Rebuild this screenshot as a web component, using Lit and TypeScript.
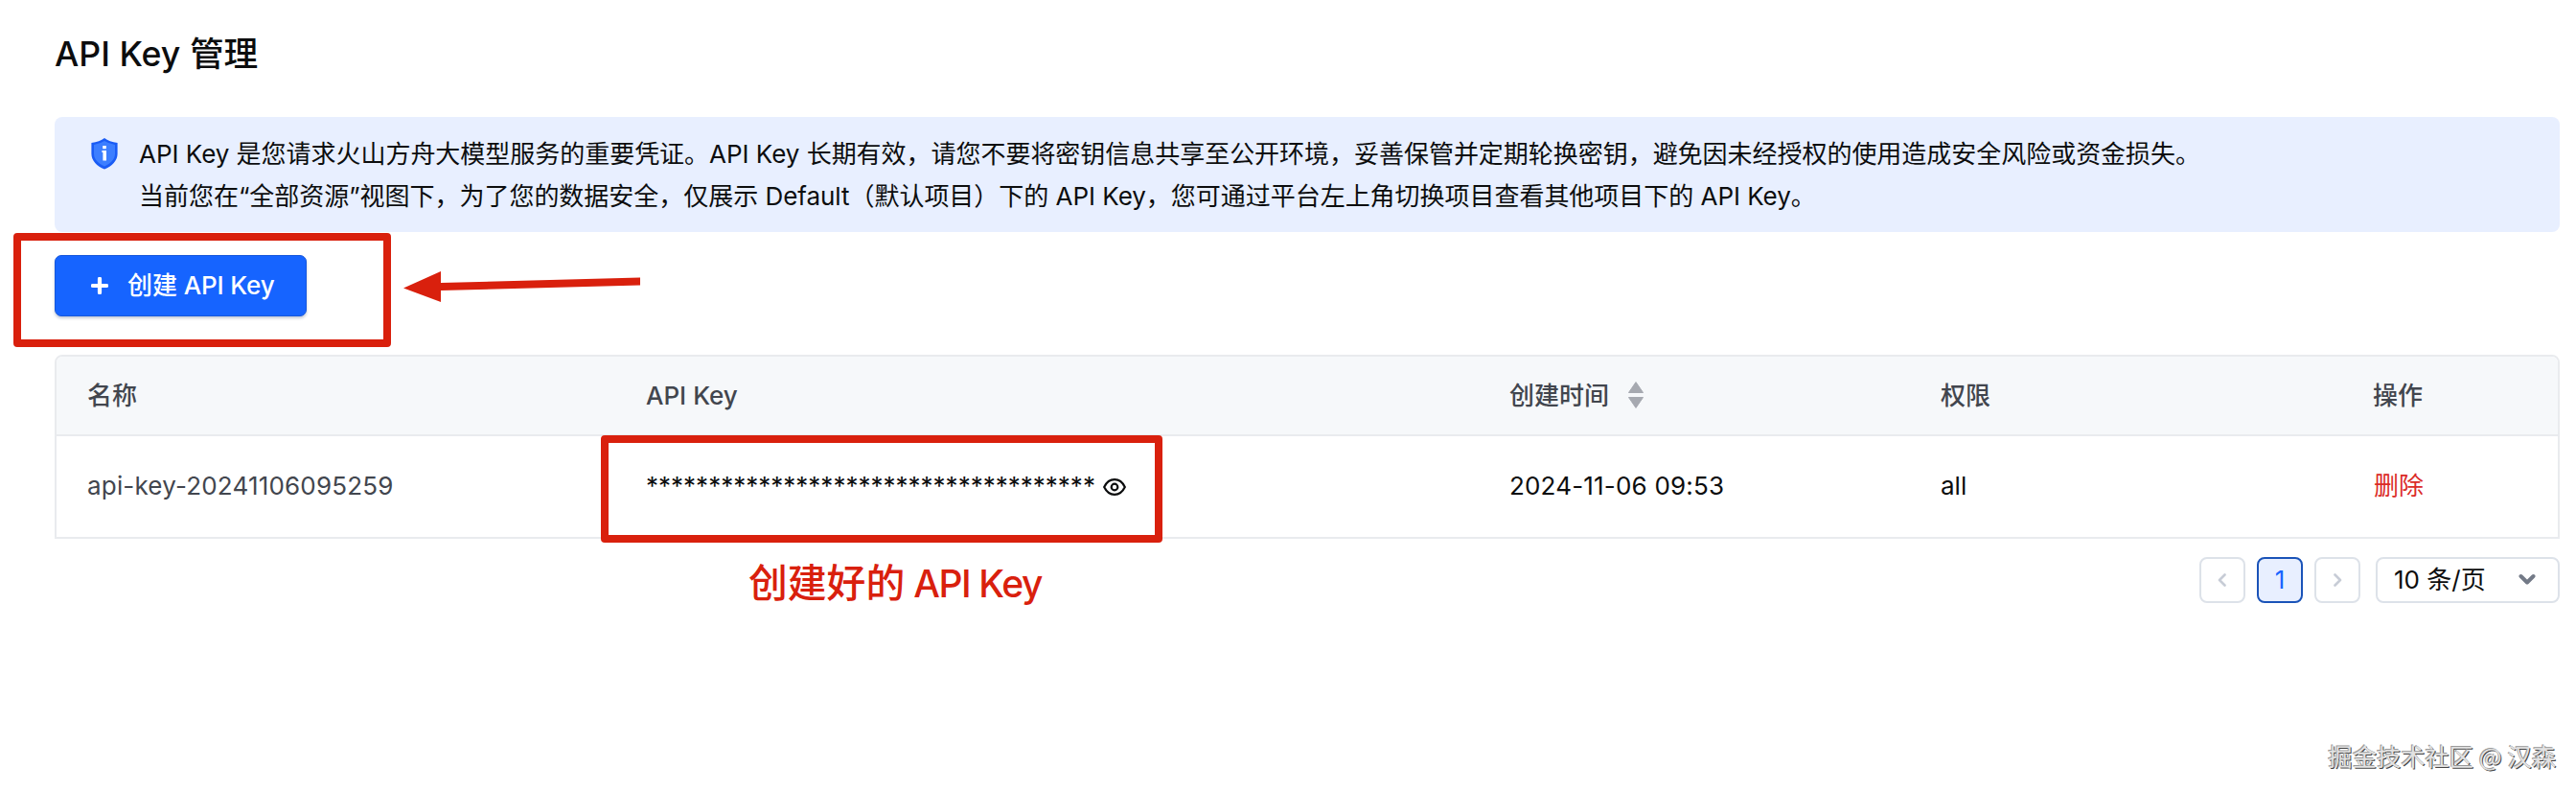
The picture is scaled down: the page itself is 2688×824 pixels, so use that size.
import { LitElement, css, html, svg } from 'lit'

const ROWS = [
  {
    name: 'api-key-20241106095259',
    secret: '*'.repeat(36),
    created: '2024-11-06 09:53',
    scope: 'all',
  },
]

const shieldIcon = svg`
  <svg class="shield" viewBox="0 0 28 32" width="28" height="32">
    <path d="M14 0Q19 4 27.600 5V16.500C27.600 23.500 21.800 29.500 14 32.500 6.200 29.500 .4 23.500 .4 16.500V5Q9 4 14 0Z" fill="#1a5cf5" />
    <path d="M14 3Q18.500 6 25 6.900V16.500C25 22 20.500 26.700 14 29.400 7.500 26.700 3 22 3 16.500V6.900Q9.500 6 14 3Z" fill="#3c7eff" />
    <path d="M12.200 8h3.600v3.200h-3.600zM11.400 13h4.600V23.600h-3.600V15h-1z" fill="#fff" />
  </svg>
`

const plusIcon = svg`
  <svg class="plus" viewBox="0 0 18 18" width="18" height="18">
    <path d="M9 1.800v14.400M1.800 9h14.400" stroke="#fff" stroke-width="4.200" stroke-linecap="round" />
  </svg>
`

const eyeIcon = svg`
  <svg class="eye" viewBox="0 0 24 18" width="24" height="18">
    <path d="M1.200 9C3.600 4 7.400 1.200 12 1.200S20.400 4 22.800 9C20.400 14 16.600 16.800 12 16.800S3.600 14 1.200 9Z" fill="none" stroke="#0c0d0e" stroke-width="2.200" />
    <circle cx="12" cy="9" r="3.300" fill="none" stroke="#0c0d0e" stroke-width="2.200" />
  </svg>
`

const sortIcon = svg`
  <svg class="sort" viewBox="0 0 16 28" width="16" height="28">
    <path d="M8 .6 15.500 11.500H.5ZM8 27.400 15.500 16.500H.5Z" fill="#a6a9b0" stroke="#a6a9b0" stroke-linejoin="round" />
  </svg>
`

const chevron = (d: string, cls: string) => svg`
  <svg class=${cls} viewBox="0 0 18 14" width="18" height="14">
    <path d=${d} fill="none" stroke="currentColor" stroke-linecap="round" stroke-linejoin="round" />
  </svg>
`

export class KeyTable extends LitElement {
  static styles = css`
    :host {
      display: block;
      margin-top: 40px;
      border: 2px solid #e9ebee;
      border-radius: 8px 8px 0 0;
      box-sizing: border-box;
      height: 192px;
      color: #0c0d0e;
      font-size: 26px;
      line-height: 40px;
    }

    .row {
      display: grid;
      grid-template-columns: 583px 901px 450px 451px 1fr;
      align-items: center;
      box-sizing: border-box;
      height: 105px;
      padding-bottom: 2px;
    }

    .head {
      height: 83px;
      padding-bottom: 0;
      border-bottom: 2px solid #e9ebee;
      border-radius: 6px 6px 0 0;
      background: #f6f8fa;
      color: #42464e;
      font-weight: 500;
    }

    .cell {
      display: flex;
      align-items: center;
      height: 40px;
      padding-left: 32px;
      white-space: nowrap;
    }

    .name {
      color: #42464e;
    }

    .name,
    .created {
      letter-spacing: 0.18px;
    }

    .sort {
      margin: -2px 0 0 20px;
    }

    .eye {
      margin: 2px 0 0 8px;
    }

    .delete {
      padding-left: 33px;
      color: #db2b27;
    }
  `

  render() {
    return html`
      <div class="row head">
        <div class="cell">名称</div>
        <div class="cell">API Key</div>
        <div class="cell">创建时间${sortIcon}</div>
        <div class="cell">权限</div>
        <div class="cell">操作</div>
      </div>
      ${ROWS.map(
        (row) => html`
          <div class="row">
            <div class="cell name">${row.name}</div>
            <div class="cell"><span>${row.secret}</span>${eyeIcon}</div>
            <div class="cell created">${row.created}</div>
            <div class="cell">${row.scope}</div>
            <div class="cell delete">删除</div>
          </div>
        `
      )}
    `
  }
}

export class TablePagination extends LitElement {
  static styles = css`
    :host {
      display: flex;
      justify-content: flex-end;
      gap: 12px;
      margin-top: 19px;
      font-size: 26px;
      line-height: 42px;
    }

    .page,
    .size {
      display: flex;
      align-items: center;
      justify-content: center;
      box-sizing: border-box;
      width: 48px;
      height: 48px;
      border: 2px solid #dde2e9;
      border-radius: 8px;
      color: #c7ccd6;
      background: #fff;
    }

    .current {
      border-color: #1a53b8;
      background: #e8efff;
      color: #1664ff;
    }

    .size {
      justify-content: space-between;
      width: 192px;
      margin-left: 4px;
      padding: 0 23px 0 17px;
      color: #0c0d0e;
    }

    .arrow {
      stroke-width: 2.6;
    }

    .down {
      stroke-width: 4;
      color: #737a87;
    }
  `

  render() {
    return html`
      <div class="page">${chevron('M11.500 1.500 6 7l5.500 5.500', 'arrow')}</div>
      <div class="page current">1</div>
      <div class="page">${chevron('M6.500 1.500 12 7l-5.500 5.500', 'arrow')}</div>
      <div class="size"><span>10 条/页</span>${chevron('M2.500 3 9 9.500 15.500 3', 'down')}</div>
    `
  }
}

export class AppRoot extends LitElement {
  static styles = css`
    :host {
      display: block;
      position: relative;
      box-sizing: border-box;
      width: 2688px;
      height: 824px;
      padding: 31px 17px 0 57px;
      overflow: hidden;
      background: #fff;
      color: #0c0d0e;
      font-family: Inter, 'Noto Sans CJK SC', sans-serif;
    }

    h1 {
      margin: 0;
      height: 91px;
      font-size: 35.7px;
      font-weight: 500;
      line-height: 50px;
    }

    .notice {
      display: flex;
      gap: 22px;
      box-sizing: border-box;
      height: 120px;
      padding: 17px 38px 15px;
      border-radius: 8px;
      background: #e8efff;
      font-size: 26px;
      letter-spacing: -0.03px;
      line-height: 44px;
      white-space: nowrap;
    }

    .notice p {
      margin: 0;
    }

    .shield {
      flex: none;
      margin-top: 5px;
      overflow: visible;
    }

    .create {
      display: flex;
      align-items: center;
      gap: 20px;
      box-sizing: border-box;
      width: 263px;
      height: 64px;
      margin-top: 24px;
      padding: 0 0 1px 37px;
      border: 1px solid #1657dc;
      border-radius: 7px;
      background: #1664ff;
      box-shadow: 0 2px 3px rgba(12, 40, 100, 0.25);
      color: #fff;
      font: 500 26px/40px Inter, 'Noto Sans CJK SC', sans-serif;
      letter-spacing: -0.1px;
      white-space: nowrap;
    }

    .plus {
      flex: none;
    }

    /* callouts laid over the page */
    .mark {
      position: absolute;
      box-sizing: border-box;
      border: 8px solid #d9200d;
      border-radius: 4px;
    }

    .mark-create {
      left: 14px;
      top: 243px;
      width: 394px;
      height: 119px;
    }

    .mark-key {
      left: 627px;
      top: 454px;
      width: 586px;
      height: 112px;
    }

    .mark-arrow {
      position: absolute;
      left: 421px;
      top: 282px;
    }

    .mark-text {
      position: absolute;
      left: 781px;
      top: 580px;
      color: #d9200d;
      font-size: 40.8px;
      font-weight: 500;
      line-height: 56px;
      white-space: nowrap;
    }

    .latin {
      font-size: 39px;
      letter-spacing: -1.4px;
    }

    .watermark {
      position: absolute;
      right: 21px;
      top: 770px;
      color: #e2e2e2;
      font-family: 'Noto Sans CJK SC', sans-serif;
      font-size: 25.3px;
      line-height: 36px;
      text-shadow: -1px -1px 0 #9a9a9a, 1px 1px 0 #444;
      white-space: nowrap;
    }
  `

  render() {
    return html`
      <h1>API Key 管理</h1>
      <div class="notice">
        ${shieldIcon}
        <div>
          <p>API Key 是您请求火山方舟大模型服务的重要凭证。API Key 长期有效，请您不要将密钥信息共享至公开环境，妥善保管并定期轮换密钥，避免因未经授权的使用造成安全风险或资金损失。</p>
          <p>当前您在“全部资源”视图下，为了您的数据安全，仅展示 Default（默认项目）下的 API Key，您可通过平台左上角切换项目查看其他项目下的 API Key。</p>
        </div>
      </div>
      <button class="create">${plusIcon}<span>创建 API Key</span></button>
      <key-table></key-table>
      <table-pagination></table-pagination>

      <div class="mark mark-create"></div>
      <svg class="mark-arrow" viewBox="0 0 248 34" width="248" height="34">
        <path d="M0 18.500 39 1V13L247 7.500V15.500L39 21V33Z" fill="#d9200d" />
      </svg>
      <div class="mark mark-key"></div>
      <div class="mark-text">创建好的<span class="latin"> API Key</span></div>
      <div class="watermark">掘金技术社区 @ 汉森</div>
    `
  }
}

customElements.define('key-table', KeyTable)
customElements.define('table-pagination', TablePagination)
customElements.define('app-root', AppRoot)
